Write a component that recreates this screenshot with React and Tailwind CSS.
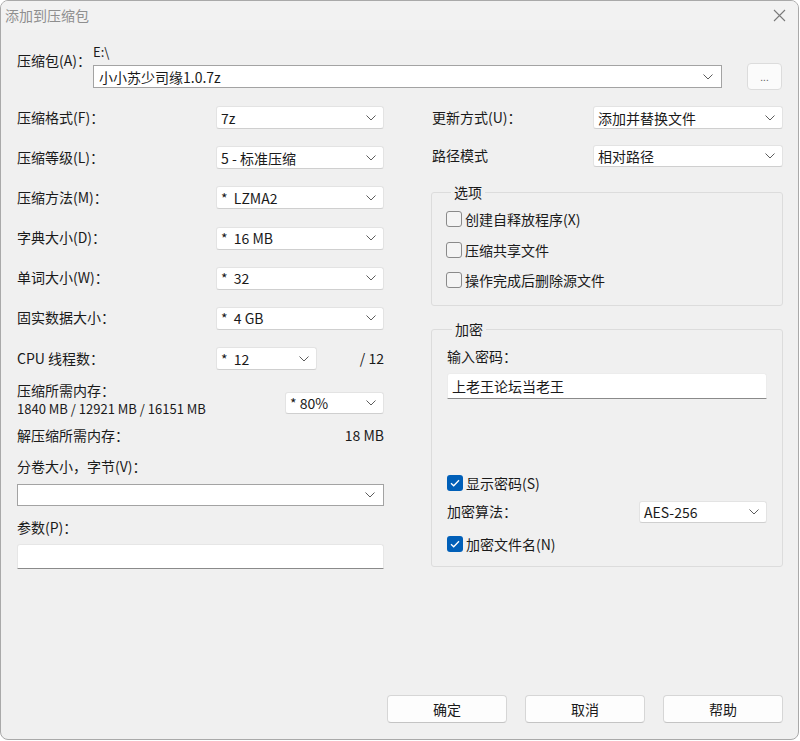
import React from 'react'

const FONT = { fontFamily: '"Noto Sans CJK SC", "Noto Sans", sans-serif' }

function Chevron() {
  return (
    <svg width="10" height="6" viewBox="0 0 10 6" className="shrink-0">
      <polyline points="0.5,0.5 5,5 9.5,0.5" fill="none" stroke="#5c5c5c" strokeWidth="1" />
    </svg>
  )
}

function Select({ value, w, h = 'h-[23px]' }) {
  return (
    <div
      className={`flex items-center justify-between ${h} bg-white border border-[#e3e3e3] border-b-[#cfcfcf] rounded-[3px] pl-[4px] pr-[7px] shrink-0`}
      style={{ width: w }}
    >
      <span className="whitespace-pre text-[14px] leading-none">{value}</span>
      <Chevron />
    </div>
  )
}

function Combo({ value, className }) {
  return (
    <div className={`flex items-center justify-between bg-white border border-[#a3a3a3] pl-[5px] pr-[8px] ${className}`}>
      <span className="text-[14px] leading-none">{value}</span>
      <Chevron />
    </div>
  )
}

function Row({ label, value, selW = 168, labelW = 199 }) {
  return (
    <div className="flex items-center h-[23px]">
      <div className="text-[14px] leading-none shrink-0 -mt-[2px]" style={{ width: labelW }}>{label}</div>
      <Select value={value} w={selW} />
    </div>
  )
}

function Check({ label, checked }) {
  return (
    <div className="flex items-center h-[20px] gap-[3px]">
      {checked ? (
        <div className="w-[16px] h-[16px] rounded-[3px] bg-[#005fb8] flex items-center justify-center">
          <svg width="10" height="8" viewBox="0 0 10 8">
            <polyline points="1,4.2 3.7,6.8 9,1.2" fill="none" stroke="white" strokeWidth="1.3" />
          </svg>
        </div>
      ) : (
        <div className="w-[16px] h-[16px] rounded-[3px] border border-[#8a8a8a] bg-[#f4f4f4]" />
      )}
      <span className="text-[14px] leading-none">{label}</span>
    </div>
  )
}

function Btn({ children }) {
  return (
    <div className="w-[120px] h-[28px] bg-[#fdfdfd] border border-[#d6d6d6] border-b-[#c4c4c4] rounded-[4px] flex items-center justify-center text-[14px]">
      {children}
    </div>
  )
}

export default function App() {
  return (
    <div className="w-[800px] h-[741px] bg-white" style={FONT}>
      <div className="w-[799px] h-[740px] bg-[#f0f0f0] border border-[#a9a9a9] rounded-[8px] flex flex-col text-[#1a1a1a] overflow-hidden">
        {/* title bar */}
        <div className="h-[29px] flex items-center justify-between pl-[4px] pr-[12px] bg-[#f2f2f2]">
          <span className="text-[14px] text-[#8f8f8f]">添加到压缩包</span>
          <svg width="13" height="13" viewBox="0 0 13 13">
            <path d="M1 1 L12 12 M12 1 L1 12" stroke="#7a7a7a" strokeWidth="1.1" />
          </svg>
        </div>

        <div className="flex flex-col flex-1 pl-[16px] pr-[15px] pt-[14px] pb-[16px]">
          {/* archive path */}
          <div className="flex">
            <div className="w-[76px] pt-[7px] text-[14px] leading-[18px]">压缩包(A)：</div>
            <div className="flex flex-col">
              <div className="h-[16px] text-[13px] leading-[16px]">E:\</div>
              <div className="flex items-center h-[27px] mt-[3px]">
                <Combo value="小小苏少司缘1.0.7z" className="w-[629px] h-[23px]" />
                <div className="ml-[25px] w-[35px] h-[27px] bg-[#fbfbfb] border border-[#dcdcdc] rounded-[4px] flex items-center justify-center text-[10px] text-[#666]">...</div>
              </div>
            </div>
          </div>

          <div className="flex mt-[16px] gap-[47px]">
            {/* left column */}
            <div className="w-[367px] flex flex-col">
              <div className="flex flex-col gap-[17.2px]">
                <Row label="压缩格式(F)：" value="7z" />
                <Row label="压缩等级(L)：" value="5 - 标准压缩" />
                <Row label="压缩方法(M)：" value="*  LZMA2" />
                <Row label="字典大小(D)：" value="*  16 MB" />
                <Row label="单词大小(W)：" value="*  32" />
                <Row label="固实数据大小：" value="*  4 GB" />
                <div className="flex items-center justify-between h-[23px]">
                  <div className="flex items-center">
                    <div className="w-[199px] text-[14px] leading-none -mt-[2px]">CPU 线程数：</div>
                    <Select value="*  12" w={101} />
                  </div>
                  <span className="text-[14px] leading-none -mt-[2px]">/ 12</span>
                </div>
              </div>

              <div className="flex justify-between mt-[12px]">
                <div className="flex flex-col">
                  <div className="text-[14px] leading-[16px]">压缩所需内存：</div>
                  <div className="text-[13px] leading-[16px] mt-[3px]">1840 MB / 12921 MB / 16151 MB</div>
                </div>
                <div className="mt-[10px]">
                  <Select value="* 80%" w={99} h="h-[22px]" />
                </div>
              </div>

              <div className="flex justify-between items-center mt-[10px] h-[16px]">
                <span className="text-[14px] leading-none">解压缩所需内存：</span>
                <span className="text-[14px] leading-none">18 MB</span>
              </div>

              <div className="mt-[15px] h-[16px] text-[14px] leading-[16px]">分卷大小，字节(V)：</div>
              <Combo value="" className="mt-[10px] h-[22px] w-full" />

              <div className="mt-[13px] h-[16px] text-[14px] leading-[16px]">参数(P)：</div>
              <div className="mt-[9px] h-[25px] bg-white border border-[#e6e6e6] border-b-[#8a8a8a] rounded-t-[3px]" />
            </div>

            {/* right column */}
            <div className="w-[352px] flex flex-col">
              <div className="flex items-center h-[23px]">
                <div className="w-[162px] pl-[1px] text-[14px] leading-none -mt-[2px]">更新方式(U)：</div>
                <Select value="添加并替换文件" w={190} />
              </div>
              <div className="flex items-center h-[22px] mt-[16px]">
                <div className="w-[162px] pl-[1px] text-[14px] leading-none -mt-[2px]">路径模式</div>
                <Select value="相对路径" w={190} h="h-[22px]" />
              </div>

              <fieldset className="mt-[17px] border border-[#dcdcdc] rounded-[3px] pl-[14px] pb-[15px]">
                <legend className="ml-[5px] px-[3px] text-[14px] leading-[16px]">选项</legend>
                <div className="flex flex-col gap-[10.5px] mt-[9px]">
                  <Check label="创建自释放程序(X)" />
                  <Check label="压缩共享文件" />
                  <Check label="操作完成后删除源文件" />
                </div>
              </fieldset>

              <fieldset className="mt-[15px] border border-[#dcdcdc] rounded-[3px] px-[15px] pb-[12px]">
                <legend className="ml-[5px] px-[3px] text-[14px] leading-[16px]">加密</legend>
                <div className="mt-[10px] text-[14px] leading-[18px]">输入密码：</div>
                <div className="mt-[8px] h-[26px] bg-white border border-[#ececec] border-b-[#8a8a8a] rounded-t-[3px] flex items-center pl-[4px] text-[14px]">
                  上老王论坛当老王
                </div>
                <div className="mt-[74px]">
                  <Check label="显示密码(S)" checked />
                </div>
                <div className="flex items-center justify-between mt-[8px] h-[22px]">
                  <span className="text-[14px] leading-none -mt-[2px]">加密算法：</span>
                  <Select value="AES-256" w={128} h="h-[22px]" />
                </div>
                <div className="mt-[11px]">
                  <Check label="加密文件名(N)" checked />
                </div>
              </fieldset>
            </div>
          </div>

          <div className="mt-auto flex justify-end gap-[18px]">
            <Btn>确定</Btn>
            <Btn>取消</Btn>
            <Btn>帮助</Btn>
          </div>
        </div>
      </div>
    </div>
  )
}
